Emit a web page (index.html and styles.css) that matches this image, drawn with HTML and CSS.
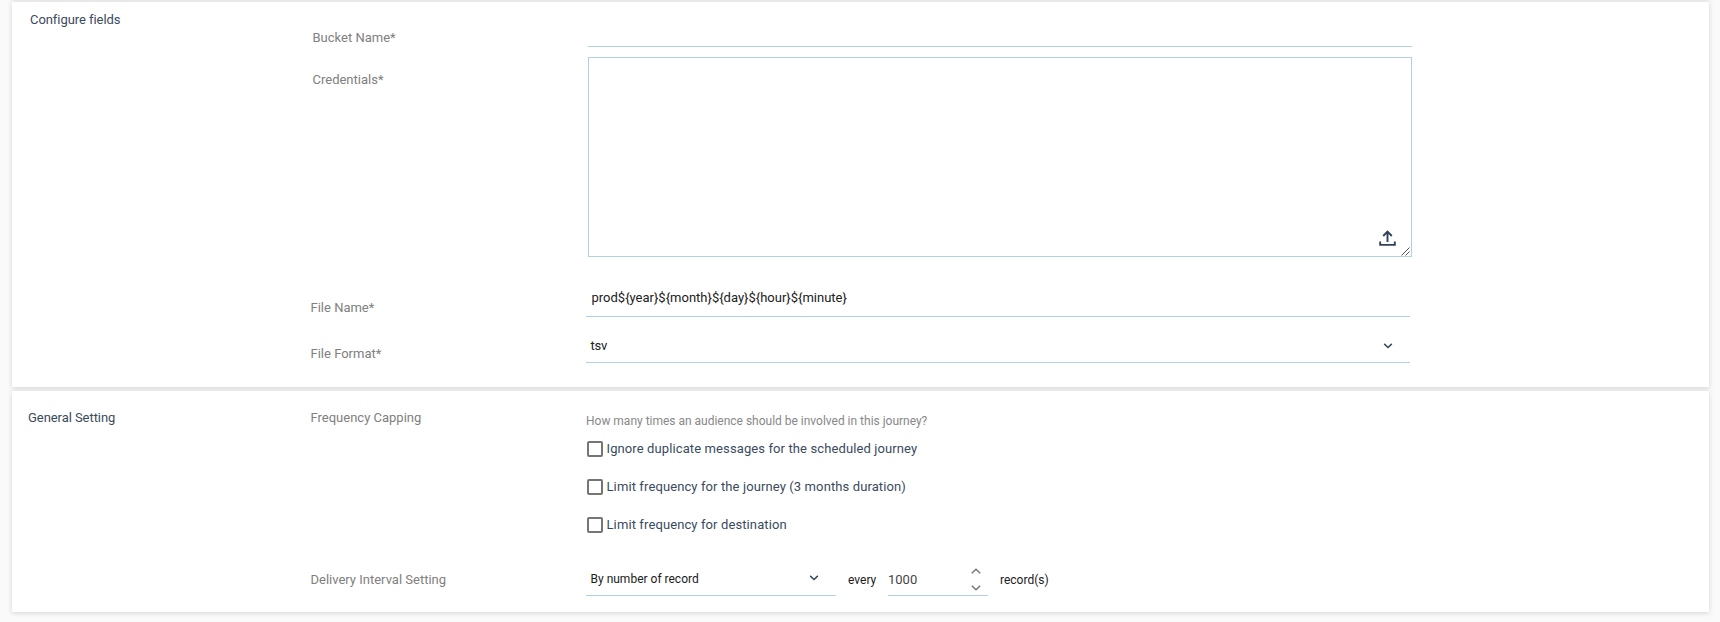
FILE: index.html
```
<!DOCTYPE html>
<html lang="en">
<head>
<meta charset="utf-8">
<title>Configure fields</title>
<link rel="stylesheet" href="styles.css">
</head>
<body>
<main class="page">
  <section class="card card-previous"></section>

  <section class="card card-fields">
    <h2 class="card-title title-fields">Configure fields</h2>
    <div class="card-body">
      <div class="inset">
        <div class="row row-bucket">
          <label class="label">Bucket Name*</label>
          <div class="line-input"></div>
        </div>
        <div class="row row-credentials">
          <label class="label">Credentials*</label>
          <div class="area">
            <svg class="upload" width="17" height="17" viewBox="0 0 17 17"><path d="M1.2 11.4V14.9H15.8V11.4M8.5 12V2M4.2 6L8.5 1.7L12.8 6" fill="none" stroke="#2f4256" stroke-width="1.9"/></svg>
            <svg class="grip" width="9" height="9" viewBox="0 0 9 9"><path d="M0.5 8.5L8.5 .5M4.5 8.5L8.5 4.5" fill="none" stroke="#555" stroke-width="1"/></svg>
          </div>
        </div>
      </div>
      <div class="row row-name">
        <label class="label">File Name*</label>
        <div class="line-input"><span class="value value-name">prod${year}${month}${day}${hour}${minute}</span></div>
      </div>
      <div class="row row-format">
        <label class="label">File Format*</label>
        <div class="line-input select"><span class="value">tsv</span>
          <svg class="chevron" width="10" height="6" viewBox="0 0 10 6"><path d="M1.2 .9L5 4.5L8.8 .9" fill="none" stroke="#34495e" stroke-width="1.5"/></svg>
        </div>
      </div>
    </div>
  </section>

  <section class="card card-general">
    <h2 class="card-title title-general">General Setting</h2>
    <div class="card-body">
      <div class="row row-capping">
        <span class="label">Frequency Capping</span>
        <div class="options">
          <p class="hint">How many times an audience should be involved in this journey?</p>
          <div class="option"><span class="box"></span><span>Ignore duplicate messages for the scheduled journey</span></div>
          <div class="option"><span class="box"></span><span>Limit frequency for the journey (3 months duration)</span></div>
          <div class="option"><span class="box"></span><span>Limit frequency for destination</span></div>
        </div>
      </div>
      <div class="row row-delivery">
        <span class="label">Delivery Interval Setting</span>
        <div class="interval">
          <div class="line-input select interval-type"><span class="value value-type">By number of record</span>
            <svg class="chevron" width="10" height="6" viewBox="0 0 10 6"><path d="M1.2 .9L5 4.5L8.8 .9" fill="none" stroke="#34495e" stroke-width="1.5"/></svg>
          </div>
          <span class="word word-every">every</span>
          <div class="line-input number"><span class="count">1000</span>
            <span class="spinner">
              <svg width="10" height="6" viewBox="0 0 10 6"><path d="M.8 5.2L5 1.2L9.2 5.2" fill="none" stroke="#777" stroke-width="1.5"/></svg>
              <svg width="10" height="6" viewBox="0 0 10 6"><path d="M.8 .8L5 4.8L9.2 .8" fill="none" stroke="#777" stroke-width="1.5"/></svg>
            </span>
          </div>
          <span class="word">record(s)</span>
        </div>
      </div>
    </div>
  </section>
</main>
</body>
</html>
```
FILE: styles.css
```
* { box-sizing: border-box; }
body {
  margin: 0;
  height: 622px;
  overflow: hidden;
  background: #fafafa;
  color: #212121;
  font: 13px/16px Roboto, sans-serif;
}
.page {
  display: flex;
  flex-direction: column;
  gap: 4px;
  margin-top: -22px;
  padding: 0 11px 0 12px;
}
.card {
  display: flex;
  flex-shrink: 0;
  background: #fff;
  box-shadow: 0 1px 5px rgba(0, 0, 0, .16);
}
.card-previous { height: 20px; }
.card-fields { height: 385px; }
.card-general { height: 221px; }
.card-title {
  flex: 0 0 298px;
  margin: 0;
  font-size: 13px;
  font-weight: 400;
  color: #3a4a5e;
  letter-spacing: -.06px;
}
.title-fields { padding: 10px 0 0 18px; }
.title-general { padding: 19px 0 0 16px; }
.card-body { flex: 1; }
.inset { padding-left: 2px; }
.row {
  display: grid;
  grid-template-columns: 276px 824px;
}
.label { padding-left: .5px; color: #808080; letter-spacing: 0; }
.line-input { border-bottom: 1px solid #b3cfe8; }
.row-bucket { height: 45px; margin-bottom: 10px; }
.row-bucket .label { padding-top: 28px; }
.row-credentials .label { padding-top: 15px; }
.area {
  position: relative;
  height: 200px;
  border: 1px solid #b3cfe8;
}
.upload { position: absolute; right: 15px; bottom: 9px; }
.grip { position: absolute; right: 1px; bottom: 0; }
.row-name { height: 60px; }
.row-name .label { padding-top: 43px; }
.row-name .line-input { padding: 33px 0 0 5.5px; }
.row-format { height: 46px; }
.row-format .label { padding-top: 29px; }
.select {
  display: flex;
  align-items: center;
  justify-content: space-between;
  padding: 12px 17px 0 4.5px;
}
.row-format .value { letter-spacing: -.2px; }
.row-capping { height: 158px; }
.row-capping .label { padding-top: 19px; }
.options { padding-top: 22px; }
.hint {
  margin: 0 0 12px;
  font-size: 12px;
  color: #888;
  letter-spacing: -.01px;
}
.option {
  display: flex;
  align-items: center;
  height: 16px;
  margin-bottom: 22px;
  padding-left: 1px;
  gap: 3.5px;
  color: #3a4a5e;
  letter-spacing: .11px;
}
.box {
  width: 16px;
  height: 16px;
  border: 2px solid #757575;
  border-radius: 2px;
}
.row-delivery { height: 47px; }
.row-delivery .label { padding-top: 23px; }
.interval { display: flex; }
.interval-type { width: 250px; }
.value-type { padding-top: 1px; font-size: 12px; }
.word { padding: 23px 0 0 12px; font-size: 12px; }
.word-every { width: 52px; }
.number {
  display: flex;
  justify-content: space-between;
  width: 100px;
  padding: 19px 7px 0 0;
}
.count { padding-top: 4px; color: #444; }
.spinner {
  display: flex;
  flex-direction: column;
  gap: 11px;
}
.spinner svg, .chevron { display: block; }
```
